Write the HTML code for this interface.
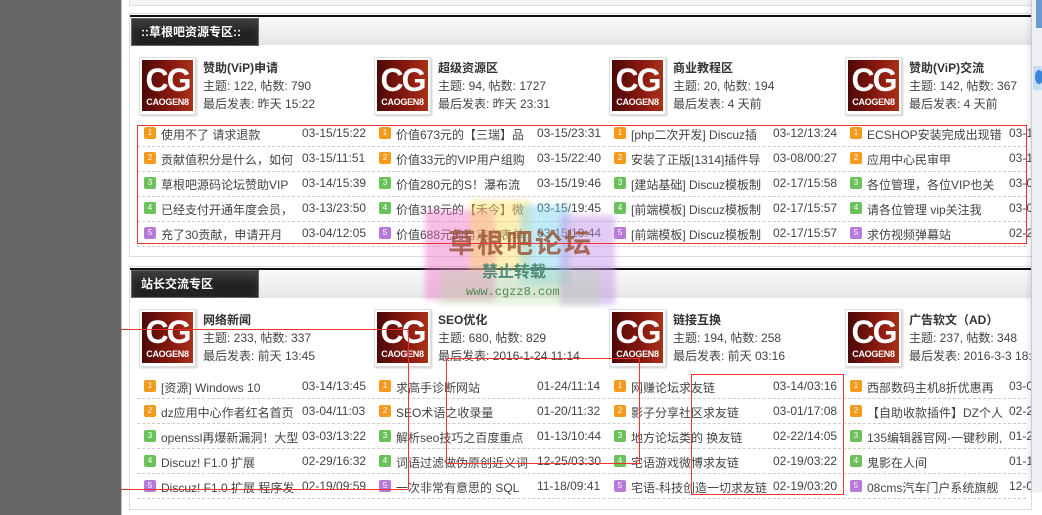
<!DOCTYPE html>
<html><head><meta charset="utf-8"><style>
*{margin:0;padding:0;box-sizing:border-box}
body{width:1042px;height:515px;overflow:hidden;background:#fff;font-family:"Liberation Sans","Noto Sans CJK SC",sans-serif;font-size:12px;color:#444;position:relative}
.a{position:absolute;white-space:nowrap}
.box{position:absolute;left:129px;width:903px;border:1px solid #dcdcdc;background:#fff}
.hd{position:absolute;left:130px;width:902px;height:30px;border-top:2px solid #111;background:linear-gradient(#fafafa,#e6e6e6)}
.tab{position:absolute;left:131px;width:128px;height:28px;background:repeating-linear-gradient(45deg,#1a1a1a 0 1px,#2a2a2a 1px 2px);border:1px solid #666;color:#fff;font-weight:bold;font-size:12px;line-height:26px;padding-left:9px;box-shadow:inset 0 8px 8px rgba(255,255,255,.12)}
.lg{position:absolute;width:57px;height:58px;border:1px solid #ddd;background:#fff;box-shadow:1px 1px 2px #ccc}
.lg i{position:absolute;left:2px;top:2px;width:51px;height:51px;background:linear-gradient(90deg,#4c0808,#8a1a10 60%,#a8321a);font-style:normal;color:#fff;text-align:center}
.lg b{display:block;font-size:32px;font-weight:bold;line-height:34px;margin-top:3px;letter-spacing:-2px;font-family:"Liberation Sans",sans-serif}
.lg s{display:block;text-decoration:none;font-size:9px;font-weight:bold;line-height:11px;letter-spacing:-0.3px}
.t{font-weight:bold;color:#333}
.n{position:absolute;width:12px;height:12px;border-radius:2px;color:#fff;font-size:8px;line-height:12px;text-align:center}
.o{background:#f59a1c}.g{background:#6cc25a}.p{background:#b77ad8}
.sep{position:absolute;left:137px;width:889px;border-top:1px dashed #ccc}
.rl{position:absolute;background:#e33}
</style></head><body>
<div class="a" style="left:0;top:0;width:121px;height:515px;background:#666"></div>
<div class="a" style="left:121px;top:0;width:1px;height:515px;background:#bbb"></div>
<div class="a" style="left:129px;top:-2px;width:903px;height:8px;border:1px solid #ddd;background:#f4f4f4"></div>

<div class="box" style="top:13px;height:244px"></div>
<div class="hd" style="top:15px"></div>
<div class="tab" style="top:18px">::草根吧资源专区::</div>

<div class="lg" style="left:139px;top:57px"><i><b>CG</b><s>CAOGEN8</s></i></div>
<div class="a t" style="left:203px;top:59px">赞助(ViP)申请</div>
<div class="a" style="left:203px;top:77px">主题: 122, 帖数: 790</div>
<div class="a" style="left:203px;top:95px">最后发表: 昨天 15:22</div>
<div class="lg" style="left:374px;top:57px"><i><b>CG</b><s>CAOGEN8</s></i></div>
<div class="a t" style="left:438px;top:59px">超级资源区</div>
<div class="a" style="left:438px;top:77px">主题: 94, 帖数: 1727</div>
<div class="a" style="left:438px;top:95px">最后发表: 昨天 23:31</div>
<div class="lg" style="left:609px;top:57px"><i><b>CG</b><s>CAOGEN8</s></i></div>
<div class="a t" style="left:673px;top:59px">商业教程区</div>
<div class="a" style="left:673px;top:77px">主题: 20, 帖数: 194</div>
<div class="a" style="left:673px;top:95px">最后发表: 4 天前</div>
<div class="lg" style="left:845px;top:57px"><i><b>CG</b><s>CAOGEN8</s></i></div>
<div class="a t" style="left:909px;top:59px">赞助(ViP)交流</div>
<div class="a" style="left:909px;top:77px">主题: 142, 帖数: 367</div>
<div class="a" style="left:909px;top:95px">最后发表: 4 天前</div>

<div class="sep" style="top:146px"></div><div class="sep" style="top:171px"></div><div class="sep" style="top:196px"></div><div class="sep" style="top:221px"></div><div class="sep" style="top:246px"></div>

<div class="n o" style="left:144px;top:127px">1</div><div class="a" style="left:161px;top:126px">使用不了 请求退款</div><div class="a" style="left:302px;top:126px">03-15/15:22</div>
<div class="n o" style="left:144px;top:152px">2</div><div class="a" style="left:161px;top:151px">贡献值积分是什么，如何</div><div class="a" style="left:302px;top:151px">03-15/11:51</div>
<div class="n g" style="left:144px;top:177px">3</div><div class="a" style="left:161px;top:176px">草根吧源码论坛赞助VIP</div><div class="a" style="left:302px;top:176px">03-14/15:39</div>
<div class="n g" style="left:144px;top:202px">4</div><div class="a" style="left:161px;top:201px">已经支付开通年度会员，</div><div class="a" style="left:302px;top:201px">03-13/23:50</div>
<div class="n p" style="left:144px;top:227px">5</div><div class="a" style="left:161px;top:226px">充了30贡献，申请开月</div><div class="a" style="left:302px;top:226px">03-04/12:05</div>

<div class="n o" style="left:379px;top:127px">1</div><div class="a" style="left:396px;top:126px">价值673元的【三瑞】品</div><div class="a" style="left:537px;top:126px">03-15/23:31</div>
<div class="n o" style="left:379px;top:152px">2</div><div class="a" style="left:396px;top:151px">价值33元的VIP用户组购</div><div class="a" style="left:537px;top:151px">03-15/22:40</div>
<div class="n g" style="left:379px;top:177px">3</div><div class="a" style="left:396px;top:176px">价值280元的S！瀑布流</div><div class="a" style="left:537px;top:176px">03-15/19:46</div>
<div class="n g" style="left:379px;top:202px">4</div><div class="a" style="left:396px;top:201px">价值318元的【禾今】微</div><div class="a" style="left:537px;top:201px">03-15/19:45</div>
<div class="n p" style="left:379px;top:227px">5</div><div class="a" style="left:396px;top:226px">价值688元的自定义表单</div><div class="a" style="left:537px;top:226px">03-15/19:44</div>

<div class="n o" style="left:614px;top:127px">1</div><div class="a" style="left:631px;top:126px">[php二次开发] Discuz插</div><div class="a" style="left:773px;top:126px">03-12/13:24</div>
<div class="n o" style="left:614px;top:152px">2</div><div class="a" style="left:631px;top:151px">安装了正版[1314]插件导</div><div class="a" style="left:773px;top:151px">03-08/00:27</div>
<div class="n g" style="left:614px;top:177px">3</div><div class="a" style="left:631px;top:176px">[建站基础] Discuz模板制</div><div class="a" style="left:773px;top:176px">02-17/15:58</div>
<div class="n g" style="left:614px;top:202px">4</div><div class="a" style="left:631px;top:201px">[前端模板] Discuz模板制</div><div class="a" style="left:773px;top:201px">02-17/15:57</div>
<div class="n p" style="left:614px;top:227px">5</div><div class="a" style="left:631px;top:226px">[前端模板] Discuz模板制</div><div class="a" style="left:773px;top:226px">02-17/15:57</div>

<div class="n o" style="left:850px;top:127px">1</div><div class="a" style="left:867px;top:126px">ECSHOP安装完成出现错</div><div class="a" style="left:1009px;top:126px">03-15</div>
<div class="n o" style="left:850px;top:152px">2</div><div class="a" style="left:867px;top:151px">应用中心民审甲</div><div class="a" style="left:1009px;top:151px">03-15</div>
<div class="n g" style="left:850px;top:177px">3</div><div class="a" style="left:867px;top:176px">各位管理，各位VIP也关</div><div class="a" style="left:1009px;top:176px">03-05</div>
<div class="n g" style="left:850px;top:202px">4</div><div class="a" style="left:867px;top:201px">请各位管理 vip关注我</div><div class="a" style="left:1009px;top:201px">03-05</div>
<div class="n p" style="left:850px;top:227px">5</div><div class="a" style="left:867px;top:226px">求仿视频弹幕站</div><div class="a" style="left:1009px;top:226px">02-25</div>

<div class="box" style="top:266px;height:244px"></div>
<div class="hd" style="top:268px"></div>
<div class="tab" style="top:270px">站长交流专区</div>

<div class="lg" style="left:139px;top:309px"><i><b>CG</b><s>CAOGEN8</s></i></div>
<div class="a t" style="left:203px;top:311px">网络新闻</div>
<div class="a" style="left:203px;top:329px">主题: 233, 帖数: 337</div>
<div class="a" style="left:203px;top:347px">最后发表: 前天 13:45</div>
<div class="lg" style="left:374px;top:309px"><i><b>CG</b><s>CAOGEN8</s></i></div>
<div class="a t" style="left:438px;top:311px">SEO优化</div>
<div class="a" style="left:438px;top:329px">主题: 680, 帖数: 829</div>
<div class="a" style="left:438px;top:347px">最后发表: 2016-1-24 11:14</div>
<div class="lg" style="left:609px;top:309px"><i><b>CG</b><s>CAOGEN8</s></i></div>
<div class="a t" style="left:673px;top:311px">链接互换</div>
<div class="a" style="left:673px;top:329px">主题: 194, 帖数: 258</div>
<div class="a" style="left:673px;top:347px">最后发表: 前天 03:16</div>
<div class="lg" style="left:845px;top:309px"><i><b>CG</b><s>CAOGEN8</s></i></div>
<div class="a t" style="left:909px;top:311px">广告软文（AD）</div>
<div class="a" style="left:909px;top:329px">主题: 237, 帖数: 348</div>
<div class="a" style="left:909px;top:347px">最后发表: 2016-3-3 18:</div>

<div class="sep" style="top:398px"></div><div class="sep" style="top:423px"></div><div class="sep" style="top:448px"></div><div class="sep" style="top:473px"></div><div class="sep" style="top:498px"></div>

<div class="n o" style="left:144px;top:380px">1</div><div class="a" style="left:161px;top:379px">[资源] Windows 10</div><div class="a" style="left:302px;top:379px">03-14/13:45</div>
<div class="n o" style="left:144px;top:405px">2</div><div class="a" style="left:161px;top:404px">dz应用中心作者红名首页</div><div class="a" style="left:302px;top:404px">03-04/11:03</div>
<div class="n g" style="left:144px;top:430px">3</div><div class="a" style="left:161px;top:429px">openssl再爆新漏洞！大型</div><div class="a" style="left:302px;top:429px">03-03/13:22</div>
<div class="n g" style="left:144px;top:455px">4</div><div class="a" style="left:161px;top:454px">Discuz! F1.0 扩展</div><div class="a" style="left:302px;top:454px">02-29/16:32</div>
<div class="n p" style="left:144px;top:480px">5</div><div class="a" style="left:161px;top:479px">Discuz! F1.0 扩展 程序发</div><div class="a" style="left:302px;top:479px">02-19/09:59</div>

<div class="n o" style="left:379px;top:380px">1</div><div class="a" style="left:396px;top:379px">求高手诊断网站</div><div class="a" style="left:537px;top:379px">01-24/11:14</div>
<div class="n o" style="left:379px;top:405px">2</div><div class="a" style="left:396px;top:404px">SEO术语之收录量</div><div class="a" style="left:537px;top:404px">01-20/11:32</div>
<div class="n g" style="left:379px;top:430px">3</div><div class="a" style="left:396px;top:429px">解析seo技巧之百度重点</div><div class="a" style="left:537px;top:429px">01-13/10:44</div>
<div class="n g" style="left:379px;top:455px">4</div><div class="a" style="left:396px;top:454px">词语过滤做伪原创近义词</div><div class="a" style="left:537px;top:454px">12-25/03:30</div>
<div class="n p" style="left:379px;top:480px">5</div><div class="a" style="left:396px;top:479px">一次非常有意思的 SQL</div><div class="a" style="left:537px;top:479px">11-18/09:41</div>

<div class="n o" style="left:614px;top:380px">1</div><div class="a" style="left:631px;top:379px">网赚论坛求友链</div><div class="a" style="left:773px;top:379px">03-14/03:16</div>
<div class="n o" style="left:614px;top:405px">2</div><div class="a" style="left:631px;top:404px">影子分享社区求友链</div><div class="a" style="left:773px;top:404px">03-01/17:08</div>
<div class="n g" style="left:614px;top:430px">3</div><div class="a" style="left:631px;top:429px">地方论坛类的 换友链</div><div class="a" style="left:773px;top:429px">02-22/14:05</div>
<div class="n g" style="left:614px;top:455px">4</div><div class="a" style="left:631px;top:454px">宅语游戏微博求友链</div><div class="a" style="left:773px;top:454px">02-19/03:22</div>
<div class="n p" style="left:614px;top:480px">5</div><div class="a" style="left:631px;top:479px">宅语-科技创造一切求友链</div><div class="a" style="left:773px;top:479px">02-19/03:20</div>

<div class="n o" style="left:850px;top:380px">1</div><div class="a" style="left:867px;top:379px">西部数码主机8折优惠再</div><div class="a" style="left:1009px;top:379px">03-02</div>
<div class="n o" style="left:850px;top:405px">2</div><div class="a" style="left:867px;top:404px">【自助收款插件】DZ个人</div><div class="a" style="left:1009px;top:404px">02-25</div>
<div class="n g" style="left:850px;top:430px">3</div><div class="a" style="left:867px;top:429px">135编辑器官网-一键秒刷,</div><div class="a" style="left:1009px;top:429px">01-28</div>
<div class="n g" style="left:850px;top:455px">4</div><div class="a" style="left:867px;top:454px">鬼影在人间</div><div class="a" style="left:1009px;top:454px">01-15</div>
<div class="n p" style="left:850px;top:480px">5</div><div class="a" style="left:867px;top:479px">08cms汽车门户系统旗舰</div><div class="a" style="left:1009px;top:479px">12-04</div>

<div class="a" style="left:425px;top:210px;width:70px;height:90px;background:rgba(240,110,200,.45);filter:blur(3px)"></div>
<div class="a" style="left:470px;top:200px;width:60px;height:70px;background:rgba(255,220,90,.45);filter:blur(3px)"></div>
<div class="a" style="left:520px;top:205px;width:50px;height:80px;background:rgba(120,210,240,.45);filter:blur(3px)"></div>
<div class="a" style="left:560px;top:215px;width:55px;height:90px;background:rgba(190,140,230,.45);filter:blur(3px)"></div>
<div class="a" style="left:440px;top:270px;width:160px;height:35px;background:rgba(180,220,160,.35);filter:blur(3px)"></div>
<div class="a" style="left:448px;top:222px;font-size:27px;font-weight:bold;color:rgba(150,80,50,.8);letter-spacing:2px">草根吧论坛</div>
<div class="a" style="left:482px;top:258px;font-size:16px;font-weight:bold;color:#4f8a78">禁止转载</div>
<div class="a" style="left:466px;top:285px;font-size:12px;color:#4f8a50;font-family:'Liberation Mono',monospace">www.cgzz8.com</div>

<div class="a" style="left:137px;top:125px;width:890px;height:119px;border:1px solid #e33"></div>
<div class="a" style="left:691px;top:374px;width:153px;height:121px;border:1px solid #e33"></div>
<div class="rl" style="left:121px;top:329px;width:288px;height:1px"></div>
<div class="rl" style="left:408px;top:329px;width:1px;height:161px"></div>
<div class="rl" style="left:121px;top:489px;width:288px;height:1px"></div>
<div class="rl" style="left:446px;top:358px;width:194px;height:1px"></div>
<div class="rl" style="left:446px;top:358px;width:1px;height:106px"></div>
<div class="rl" style="left:446px;top:463px;width:194px;height:1px"></div>
<div class="rl" style="left:639px;top:358px;width:1px;height:106px"></div>

<div class="a" style="left:1031px;top:0;width:11px;height:492px;background:#eef0f3;border-left:1px solid #c8ccd2;box-shadow:-3px 0 4px rgba(0,0,0,.08)"></div>
<div class="a" style="left:1036px;top:0;width:6px;height:28px;background:#6a9ad0"></div>
<div class="a" style="left:1033px;top:66px;width:9px;height:24px;background:#c5dcf2"></div>
<div class="a" style="left:1035px;top:70px;width:8px;height:14px;border-radius:50%;background:#3a86d8"></div>
</body></html>
